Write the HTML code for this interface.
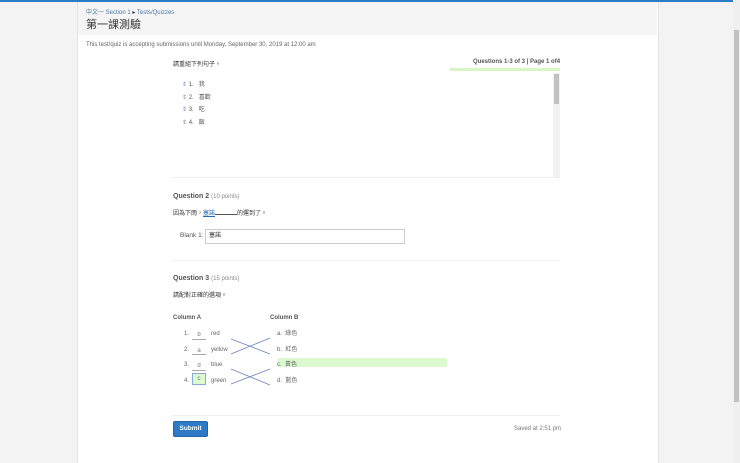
<!DOCTYPE html>
<html><head><meta charset="utf-8"><style>
body{margin:0;width:740px;height:463px;background:#f3f3f3;font-family:"Liberation Sans","Noto Sans CJK TC",sans-serif;position:relative;overflow:hidden;color:#333}
.a{position:absolute;white-space:nowrap}
.s{font-size:6px}
</style></head><body>
<div class="a" style="left:0;top:0;width:740px;height:2px;background:#2b7bc4"></div>
<div class="a" style="left:77px;top:2px;width:580px;height:461px;background:#fff;border-left:1px solid #e3e3e3;border-right:1px solid #e3e3e3"></div>
<div class="a" style="left:78px;top:2px;width:579px;height:33px;background:#f5f5f5"></div>
<div class="a" style="left:733px;top:0;width:7px;height:463px;background:#f0f0f0"></div>
<div class="a" style="left:734px;top:30px;width:5px;height:372px;background:#c1c1c1"></div>
<div class="a s" style="left:86px;top:7px;color:#4a76a8">中文一 Section 1 <span style="color:#333">▸</span> Tests/Quizzes</div>
<div class="a" style="left:86px;top:16px;font-size:11px;color:#333">第一課測驗</div>
<div class="a s" style="left:86px;top:42px;color:#666">This test/quiz is accepting submissions until Monday, September 30, 2019 at 12:00 am</div>
<div class="a s" style="left:173px;top:59px">請重組下列句子。</div>
<div class="a s" style="left:473px;top:59px;font-weight:bold;color:#555">Questions 1-3 of 3 | Page 1 of4</div>
<div class="a" style="left:450px;top:68px;width:110px;height:3px;background:#d9f5c8"></div>
<div class="a" style="left:553px;top:73px;width:7px;height:104px;background:#f1f1f1"></div>
<div class="a" style="left:554px;top:74px;width:5px;height:30px;background:#c1c1c1"></div>
<div class="a" style="left:172px;top:177px;width:388px;height:1px;background:#eee"></div>
<div class="a s" style="left:182px;top:79px;line-height:12.7px;color:#555"><span style="color:#6b8fc2">⇕</span> 1.&nbsp;&nbsp; 我<br><span style="color:#6b8fc2">⇕</span> 2.&nbsp;&nbsp; 喜歡<br><span style="color:#6b8fc2">⇕</span> 3.&nbsp;&nbsp; 吃<br><span style="color:#6b8fc2">⇕</span> 4.&nbsp;&nbsp; 飯</div>
<div class="a" style="left:173px;top:193px;font-size:7px;color:#555;font-weight:bold">Question 2 <span class="s" style="font-weight:normal;color:#888">(10 points)</span></div>
<div class="a s" style="left:173px;top:208px">因為下雨，<span style="color:#2a6bb8;text-decoration:underline">塞諾</span><span style="display:inline-block;width:22px;border-bottom:1px solid #555"></span>的運到了。</div>
<div class="a s" style="left:180px;top:232px;color:#555;font-size:6.5px">Blank 1:</div>
<div class="a s" style="left:205px;top:229px;width:195px;height:13px;border:1px solid #ccc;line-height:13px;padding-left:3px">塞諾</div>
<div class="a" style="left:172px;top:260px;width:388px;height:1px;background:#f0f0f0"></div>
<div class="a" style="left:173px;top:275px;font-size:7px;color:#555;font-weight:bold">Question 3 <span class="s" style="font-weight:normal;color:#888">(15 points)</span></div>
<div class="a s" style="left:173px;top:290px">請配對正確的選項。</div>
<div class="a s" style="left:173px;top:315px;color:#555;font-weight:bold">Column A</div>
<div class="a s" style="left:270px;top:315px;color:#555;font-weight:bold">Column B</div>
<div class="a" style="left:278px;top:358px;width:169px;height:9px;background:#dcf9d0"></div>
<div class="a s" style="left:184px;top:327px;line-height:15.5px;color:#666">1.<br>2.<br>3.<br>4.</div>
<div class="a s" style="left:211px;top:327px;line-height:15.5px;color:#666">red<br>yellow<br>blue<br>green</div>
<div class="a s" style="left:277px;top:327px;line-height:15.5px;color:#666">a.&nbsp; 綠色<br>b.&nbsp; 紅色<br>c.&nbsp; 黃色<br>d.&nbsp; 藍色</div>
<div class="a s" style="left:192px;top:328px;width:14px;text-align:center;line-height:15.5px;color:#777">b<br>a<br>d</div>
<div class="a" style="left:192px;top:339px;width:14px;height:1px;background:#aaa"></div>
<div class="a" style="left:192px;top:354px;width:14px;height:1px;background:#aaa"></div>
<div class="a" style="left:192px;top:370px;width:14px;height:1px;background:#aaa"></div>
<div class="a s" style="left:192px;top:373px;width:12px;height:10px;border:1px solid #8aa9d6;background:#dcf9d0;text-align:center;line-height:10px;color:#777">c</div>
<svg class="a" style="left:0;top:0" width="740" height="463"><g stroke="#6a84c2" stroke-width="0.8"><line x1="231" y1="339" x2="270" y2="354"/><line x1="231" y1="354" x2="270" y2="338"/><line x1="231" y1="369" x2="270" y2="385"/><line x1="231" y1="384" x2="270" y2="369"/></g></svg>
<div class="a" style="left:172px;top:415px;width:388px;height:1px;background:#f0f0f0"></div>
<div class="a" style="left:173px;top:421px;width:33px;height:14px;background:#2f7ac6;border:1px solid #2563a8;border-radius:2px;color:#fff;font-size:6.5px;font-weight:bold;text-align:center;line-height:14px">Submit</div>
<div class="a s" style="left:514px;top:426px;color:#777">Saved at 2:51 pm</div>
</body></html>
